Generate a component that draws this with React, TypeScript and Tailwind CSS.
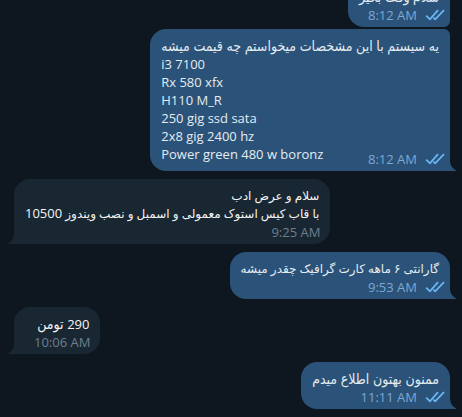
import type { ReactNode } from "react";

type MessageProps = {
  side: "in" | "out";
  time: string;
  children: ReactNode;
  shape?: string;
  spacing?: string;
  tail?: boolean;
  inlineTime?: boolean;
};

function Ticks() {
  return (
    <svg className="h-3 w-5" viewBox="0 0 20 12" fill="none" stroke="#6bb7f5" strokeWidth="1.8" role="img" aria-label="Read">
      <path d="M1.2 6.6 5 10.3 13 1.2" />
      <path d="M8.4 8.6 10.2 10.3 19 1.2" />
    </svg>
  );
}

function Message({
  side,
  time,
  children,
  shape = "rounded-2xl",
  spacing = "mt-2 pl-[11px]",
  tail = true,
  inlineTime = false,
}: MessageProps) {
  const out = side === "out";
  return (
    <li
      className={`relative w-fit pt-2 pr-[11px] ${spacing} ${shape} ${
        out ? "self-end bg-[#2b5278] text-[#e4ecf2]" : "self-start bg-[#192733] text-[#f5f5f5]"
      } ${inlineTime ? "pb-2" : "pb-[3px]"}`}
    >
      <div>{children}</div>
      <div
        className={`flex items-center justify-end gap-2 ${
          out ? "text-[#7da8d3]" : "text-[#6d7f8f]"
        } ${inlineTime ? "absolute right-[5px] bottom-[3px]" : out ? "-mr-[6px]" : "-mr-px"}`}
      >
        <time>{time}</time>
        {out && <Ticks />}
      </div>
      {tail && (
        <svg
          className={`absolute bottom-0 h-[10px] w-[6px] ${out ? "left-full" : "right-full -scale-x-100"}`}
          viewBox="0 0 6 10"
          fill={out ? "#2b5278" : "#192733"}
          aria-hidden="true"
        >
          <path d="M0 0C.2 4.5 2.5 7.5 6 9.4V10H0Z" />
        </svg>
      )}
    </li>
  );
}

function Farsi({ children, small = false }: { children: ReactNode; small?: boolean }) {
  return (
    <p
      dir="rtl"
      lang="fa"
      className={`h-[18px] leading-[18px] ${
        small
          ? "font-['Open_Sans','DejaVu_Sans',sans-serif] text-[12px]"
          : "font-['Open_Sans','DejaVu_Sans_Condensed','DejaVu_Sans',sans-serif] text-[14px]"
      }`}
    >
      {children}
    </p>
  );
}

function Digits({ children }: { children: ReactNode }) {
  return <span className="text-[13px] leading-none">{children}</span>;
}

export default function App() {
  return (
    <main className="min-h-screen overflow-hidden bg-[#0e1620] pr-3 pb-2 pl-[14px] font-['Open_Sans','DejaVu_Sans',sans-serif] text-[13px] leading-[18px]">
      <ul className="-mt-5 flex flex-col">
        <Message side="out" time="8:12 AM" tail={false} shape="rounded-2xl rounded-br-md" spacing="pl-[11px]">
          <Farsi>سلام وقت بخیر</Farsi>
        </Message>
        <Message
          side="out"
          time="8:12 AM"
          shape="rounded-2xl rounded-tr-md rounded-br-none"
          spacing="mt-0.5 pl-[11px]"
          inlineTime
        >
          <Farsi>یه سیستم با این مشخصات میخواستم چه قیمت میشه</Farsi>
          <p>i3 7100</p>
          <p>Rx 580 xfx</p>
          <p>H110 M_R</p>
          <p>250 gig ssd sata</p>
          <p>2x8 gig 2400 hz</p>
          <p>Power green 480 w boronz</p>
        </Message>
        <Message side="in" time="9:25 AM" shape="rounded-2xl rounded-bl-none">
          <Farsi small>سلام و عرض ادب</Farsi>
          <Farsi small>
            با قاب کیس استوک معمولی و اسمبل و نصب ویندوز <Digits>10500</Digits>
          </Farsi>
        </Message>
        <Message side="out" time="9:53 AM" shape="rounded-2xl rounded-br-none">
          <Farsi small>گارانتی ۶ ماهه کارت گرافیک چقدر میشه</Farsi>
        </Message>
        <Message side="in" time="10:06 AM" shape="rounded-2xl rounded-bl-none" spacing="mt-2 pl-5">
          <Farsi>
            <Digits>290</Digits> تومن
          </Farsi>
        </Message>
        <Message side="out" time="11:11 AM" shape="rounded-2xl rounded-br-none">
          <Farsi>ممنون بهتون اطلاع میدم</Farsi>
        </Message>
      </ul>
    </main>
  );
}
